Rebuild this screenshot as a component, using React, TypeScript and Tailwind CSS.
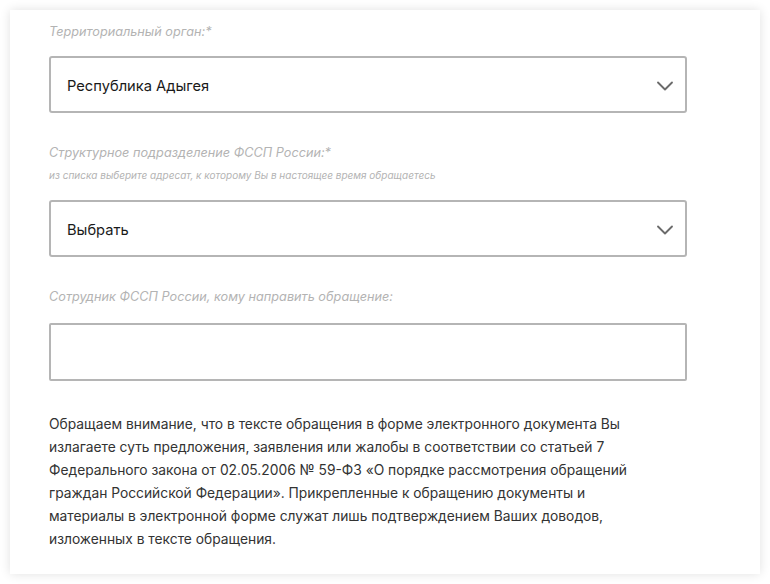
import { ChevronDown } from 'lucide-react'

const labelCls = 'text-[12.7px] leading-5 italic text-[#b3b3b3]'

const SelectBox = ({ value }: { value: string }) => (
  <div className="flex h-[57px] items-center justify-between rounded-[3px] border-2 border-[#b5b5b5] bg-white pl-4 pr-[6px]">
    <span className="pt-[3px] text-[14.7px] text-[#1a1a1a]">{value}</span>
    <ChevronDown className="mt-[2px] h-7 w-7 text-[#6b6b6b]" strokeWidth={1.6} />
  </div>
)

export default function App() {
  return (
    <div className="min-h-[584px] bg-white p-[10px] font-['Inter',sans-serif]">
      <div className="h-[564px] w-[750px] bg-white pl-[39px] pt-3 shadow-[0_0_10px_rgba(0,0,0,0.12)]">
        <div className="w-[638px]">
          {/* Территориальный орган */}
          <div className={labelCls}>Территориальный орган:*</div>
          <div className="mt-[14px]">
            <SelectBox value="Республика Адыгея" />
          </div>

          {/* Структурное подразделение */}
          <div className={`${labelCls} mt-[30px]`}>Структурное подразделение ФССП России:*</div>
          <div className="mt-[5px] text-[10px] leading-[14px] italic text-[#b3b3b3]">
            из списка выберите адресат, к которому Вы в настоящее время обращаетесь
          </div>
          <div className="mt-[18px]">
            <SelectBox value="Выбрать" />
          </div>

          {/* Сотрудник */}
          <div className={`${labelCls} mt-[30px]`}>Сотрудник ФССП России, кому направить обращение:</div>
          <div className="mt-4 h-[58px] rounded-[2px] border-2 border-[#b5b5b5] bg-white" />

          <p className="mt-[32px] text-[13.8px] leading-[23px] text-[#333333]">
            Обращаем внимание, что в тексте обращения в форме электронного документа Вы
            <br />
            излагаете суть предложения, заявления или жалобы в соответствии со статьей 7
            <br />
            Федерального закона от 02.05.2006 № 59-ФЗ «О порядке рассмотрения обращений
            <br />
            граждан Российской Федерации». Прикрепленные к обращению документы и
            <br />
            материалы в электронной форме служат лишь подтверждением Ваших доводов,
            <br />
            изложенных в тексте обращения.
          </p>
        </div>
      </div>
    </div>
  )
}
